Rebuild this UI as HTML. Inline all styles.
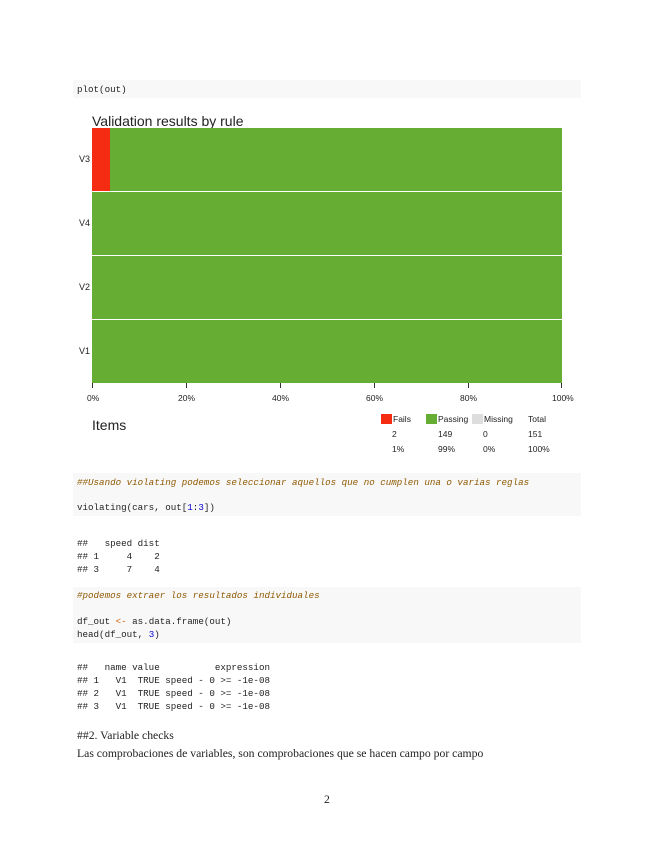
<!DOCTYPE html>
<html><head><meta charset="utf-8"><style>
body{margin:0;width:655px;height:848px;background:#fff;position:relative;overflow:hidden}
.a{position:absolute;white-space:pre;line-height:1}
.m{font-family:"Liberation Mono",monospace;font-size:9.2px;color:#222}
.s{font-family:"Liberation Sans",sans-serif;color:#222}
.r{font-family:"Liberation Serif",serif;font-size:11.7px;color:#222}
.bg{position:absolute;background:#f8f8f8;left:73px;width:508px}
.c{color:#8f5902;font-style:italic}
.n{color:#0000cf}
.o{color:#ce5c00}
</style></head><body>
<div class="bg" style="top:80px;height:18px"></div>
<div class="a m" style="left:77px;top:85px">plot(out)</div>

<div class="a s" style="left:92px;top:114px;font-size:14px">Validation results by rule</div>
<div style="position:absolute;left:92px;top:128px;width:470px;height:255px;background:#fff">
<div style="position:absolute;left:0;top:0;width:470px;height:63px;background:#66ae33"></div>
<div style="position:absolute;left:0;top:0;width:18px;height:63px;background:#f52c12"></div>
<div style="position:absolute;left:0;top:64px;width:470px;height:63px;background:#66ae33"></div>
<div style="position:absolute;left:0;top:128px;width:470px;height:63px;background:#66ae33"></div>
<div style="position:absolute;left:0;top:192px;width:470px;height:63px;background:#66ae33"></div>
</div>
<div class="a s" style="left:79px;top:155px;font-size:9px">V3</div>
<div class="a s" style="left:79px;top:219px;font-size:9px">V4</div>
<div class="a s" style="left:79px;top:283px;font-size:9px">V2</div>
<div class="a s" style="left:79px;top:347px;font-size:9px">V1</div>
<div style="position:absolute;left:92px;top:383px;width:1px;height:5px;background:#333"></div>
<div style="position:absolute;left:186px;top:383px;width:1px;height:5px;background:#333"></div>
<div style="position:absolute;left:280px;top:383px;width:1px;height:5px;background:#333"></div>
<div style="position:absolute;left:374px;top:383px;width:1px;height:5px;background:#333"></div>
<div style="position:absolute;left:468px;top:383px;width:1px;height:5px;background:#333"></div>
<div style="position:absolute;left:561px;top:383px;width:1px;height:5px;background:#333"></div>
<div class="a s" style="left:87px;top:394px;font-size:8.5px">0%</div>
<div class="a s" style="left:178px;top:394px;font-size:8.5px">20%</div>
<div class="a s" style="left:272px;top:394px;font-size:8.5px">40%</div>
<div class="a s" style="left:366px;top:394px;font-size:8.5px">60%</div>
<div class="a s" style="left:460px;top:394px;font-size:8.5px">80%</div>
<div class="a s" style="left:552px;top:394px;font-size:8.5px">100%</div>
<div class="a s" style="left:92px;top:418px;font-size:14px">Items</div>
<div style="position:absolute;left:381px;top:414px;width:11px;height:10px;background:#f52c12"></div>
<div style="position:absolute;left:426px;top:414px;width:11px;height:10px;background:#66ae33"></div>
<div style="position:absolute;left:472px;top:414px;width:11px;height:10px;background:#ddd"></div>
<div class="a s" style="left:393px;top:415px;font-size:8.5px">Fails</div>
<div class="a s" style="left:438px;top:415px;font-size:8.5px">Passing</div>
<div class="a s" style="left:484px;top:415px;font-size:8.5px">Missing</div>
<div class="a s" style="left:528px;top:415px;font-size:8.5px">Total</div>
<div class="a s" style="left:392px;top:430px;font-size:8.5px">2</div>
<div class="a s" style="left:438px;top:430px;font-size:8.5px">149</div>
<div class="a s" style="left:483px;top:430px;font-size:8.5px">0</div>
<div class="a s" style="left:528px;top:430px;font-size:8.5px">151</div>
<div class="a s" style="left:392px;top:445px;font-size:8.5px">1%</div>
<div class="a s" style="left:438px;top:445px;font-size:8.5px">99%</div>
<div class="a s" style="left:483px;top:445px;font-size:8.5px">0%</div>
<div class="a s" style="left:528px;top:445px;font-size:8.5px">100%</div>

<div class="bg" style="top:473px;height:43px"></div>
<div class="a m c" style="left:77px;top:478px">##Usando violating podemos seleccionar aquellos que no cumplen una o varias reglas</div>
<div class="a m" style="left:77px;top:503px">violating(cars, out[<span class="n">1</span>:<span class="n">3</span>])</div>

<div class="a m" style="left:77px;top:537px;line-height:13px">##   speed dist
## 1     4    2
## 3     7    4</div>

<div class="bg" style="top:587px;height:56px"></div>
<div class="a m c" style="left:77px;top:591px">#podemos extraer los resultados individuales</div>
<div class="a m" style="left:77px;top:615px;line-height:13px">df_out <span class="o">&lt;-</span> as.data.frame(out)
head(df_out, <span class="n">3</span>)</div>

<div class="a m" style="left:77px;top:661px;line-height:13px">##   name value          expression
## 1   V1  TRUE speed - 0 &gt;= -1e-08
## 2   V1  TRUE speed - 0 &gt;= -1e-08
## 3   V1  TRUE speed - 0 &gt;= -1e-08</div>

<div class="a r" style="left:77px;top:730px">##2. Variable checks</div>
<div class="a r" style="left:77px;top:748px">Las comprobaciones de variables, son comprobaciones que se hacen campo por campo</div>
<div class="a r" style="left:324px;top:794px">2</div>
</body></html>
